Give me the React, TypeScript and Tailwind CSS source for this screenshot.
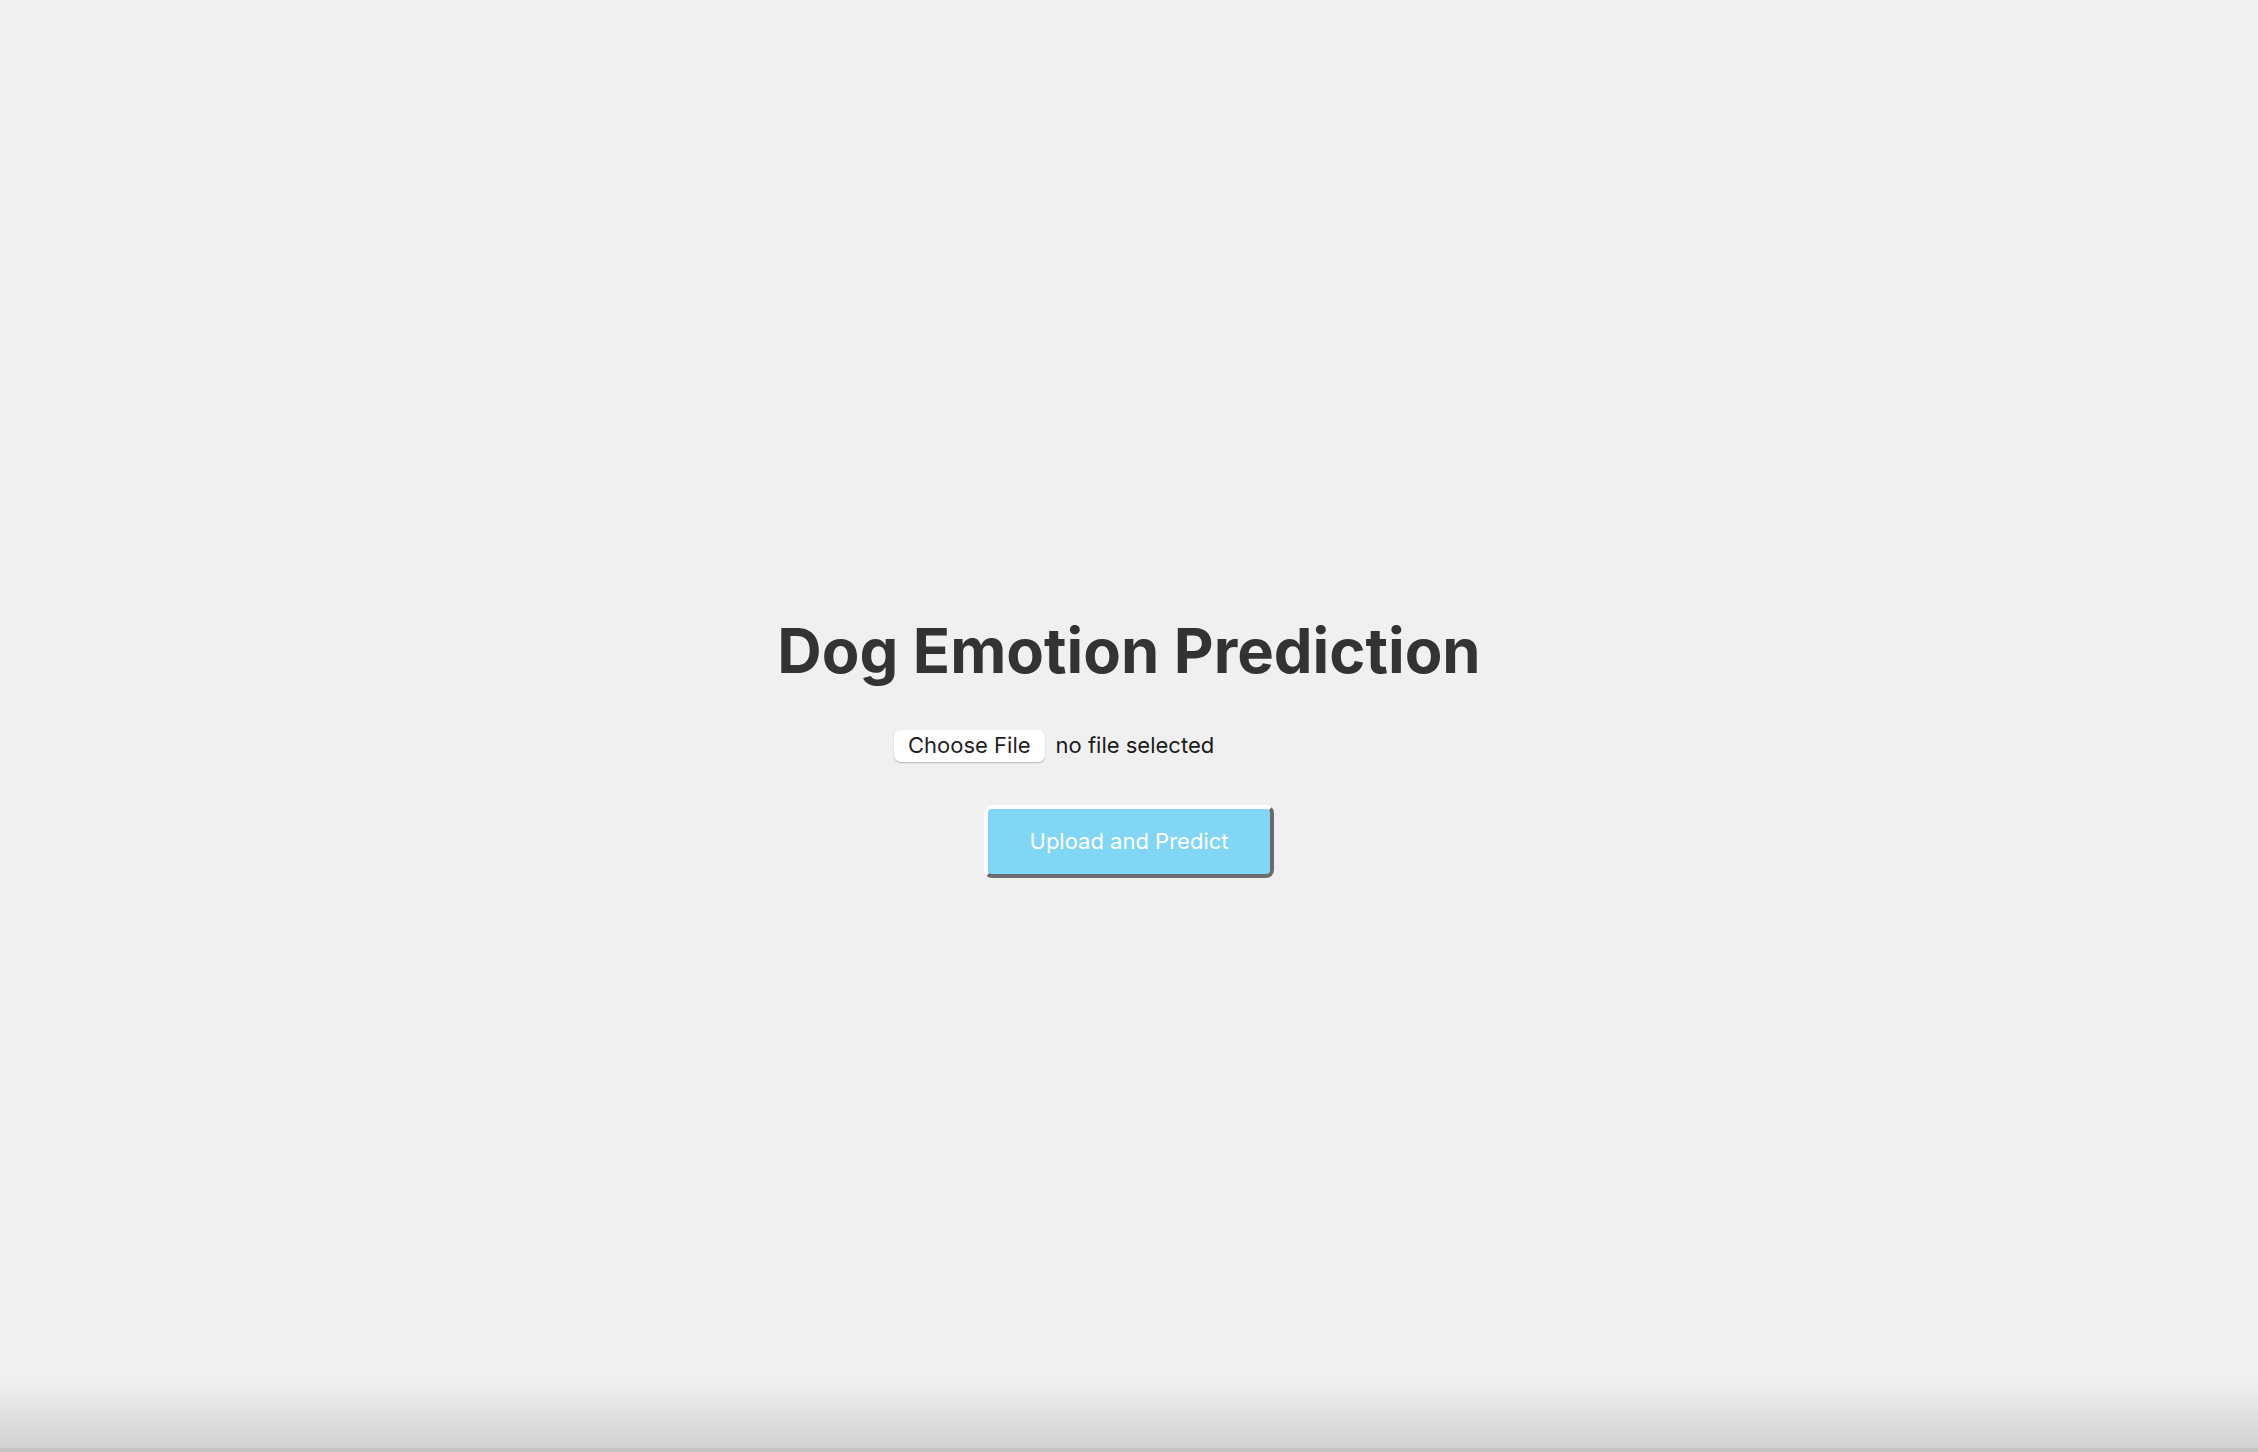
import { useState } from "react";

export default function App() {
  const [fileName, setFileName] = useState<string>("");

  const handleChange = (e: React.ChangeEvent<HTMLInputElement>) => {
    const f = e.target.files?.[0];
    setFileName(f ? f.name : "");
  };

  return (
    <div className="relative flex flex-col min-h-screen bg-[#f0f0f0] font-['Inter',sans-serif]">
      <div className="flex flex-col items-center pt-[614px]">
        <h1 className="text-[61.5px] leading-[73px] font-bold text-[#333333]">
          Dog Emotion Prediction
        </h1>

        {/* file picker */}
        <div className="w-[470px] mt-[42px] flex items-center gap-[11px]">
          <label className="h-[32px] px-[14px] flex items-center bg-white rounded-[7px] shadow-[0_1px_1.5px_rgba(0,0,0,0.25)] text-[22px] text-[#1f1f1f] cursor-pointer">
            Choose File
            <input type="file" className="hidden" onChange={handleChange} />
          </label>
          <span className="text-[22px] text-[#1a1a1a]">
            {fileName || "no file selected"}
          </span>
        </div>

        <button className="mt-[43px] w-[290px] h-[73px] bg-[#81d5f5] rounded-[8px] border-[4px] border-t-white border-l-white border-r-[#6b6b6b] border-b-[#6b6b6b] text-white text-[22px]">
          Upload and Predict
        </button>
      </div>

      {/* bottom shade */}
      <div className="absolute bottom-0 left-0 right-0 h-[72px] bg-gradient-to-b from-[#f0f0f0] to-[#d2d2d2] border-b-[4px] border-b-[#c4c4c4]" />
    </div>
  );
}
